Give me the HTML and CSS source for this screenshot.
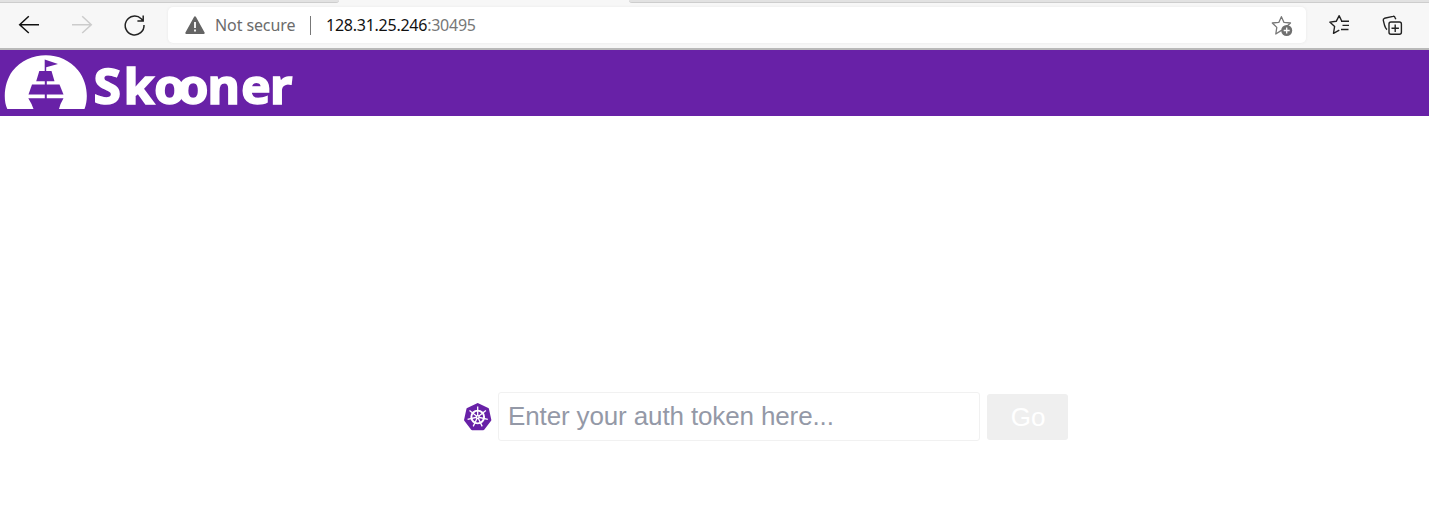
FILE: index.html
```html
<!DOCTYPE html>
<html lang="en">
<head>
<meta charset="utf-8">
<title>Skooner</title>
<link rel="stylesheet" href="styles.css">
</head>
<body>
<div class="tabs"><span class="tab tab-left"></span><span class="tab-active"></span><span class="tab tab-right"></span></div>
<nav class="toolbar">
  <svg class="nav-icons" width="168" height="42" viewBox="0 4 168 42" fill="none" stroke-width="1.5">
    <path stroke="#111" d="M39 24.7H19.5M28.8 16.2L19.7 24.7L28.8 33"/>
    <path stroke="#ccc" d="M72 24.7H91M82.2 16.2L91.3 24.7L82.2 33"/>
    <path stroke="#222" d="M144 25A9.4 9.4 0 1 1 141.2 18.8L143 20.8M143.2 15.4V21H137.4"/>
  </svg>
  <div class="address">
    <svg class="warning" width="20" height="19" viewBox="0 0 20 19"><path fill="#646464" stroke="#646464" stroke-width="2" stroke-linejoin="round" d="M10 1.3L18.7 17H1.3Z"/><path stroke="#fff" stroke-width="1.8" d="M10 6v6M10 13.5v2"/></svg>
    <span class="security">Not secure</span>
    <span class="divider"></span>
    <span class="url">128.31.25.246<span class="port">:30495</span></span>
    <svg class="star-add" width="24" height="24" viewBox="1270 13 24 24" fill="none">
      <path stroke="#777" stroke-width="1.3" stroke-linejoin="round" d="M1281.4 16.7L1284 22.4L1290.5 23L1285.8 27.3L1287 33L1281.4 30.4L1275.8 34L1276.8 27.4L1272.3 23L1278.8 22.4Z"/>
      <circle cx="1286.7" cy="30.5" r="5.5" fill="#707070"/>
      <path stroke="#fff" stroke-width="1.3" d="M1286.7 27.5v6M1283.7 30.5h6"/>
    </svg>
  </div>
  <svg class="actions" width="123" height="42" viewBox="1306 4 123 42" fill="none" stroke="#222" stroke-width="1.4" stroke-linejoin="round">
    <path d="M1344.5 21.3H1341.8L1339.2 15.7L1336.2 21.3L1329.8 22.1L1334.6 26.5L1333.5 33.4L1339.3 30.2M1341 21.3H1349M1342.5 25.4H1349M1341 29.5H1348.5"/>
    <rect x="1389" y="22" width="12.4" height="12.2" rx="2"/>
    <path d="M1395.2 24.6v7.4M1391.5 28.3h7.4M1395.8 19.3L1395 17.4Q1394.5 16 1393 16.4L1384.5 18.3Q1383 18.8 1383.3 20.3L1384.7 25.8Q1385.5 28.4 1387 29.6"/>
  </svg>
</nav>
<header class="header">
  <svg width="300" height="66" viewBox="0 50 300 66" role="img" aria-label="Skooner">
    <path fill="#fff" d="M7.3 109C2.3 98 5 81 12.5 71C28 50.5 62 49.5 78 70.3C87 81 89 98 84.5 109Z"/>
    <g fill="#6821a7"><path d="M44.7 59.6L58 64L46.2 67.3V71H51.5L54.5 81.3H36.2L39.3 71H44.7Z"/>
    <path d="M32 84.5H59.5L63.5 94.6H28.5Z"/><path d="M28.3 98.2H63.5Q60 104 59 109H33.5Q32 104 28.3 98.2Z"/></g>
    <path stroke="#6821a7" stroke-width="2" d="M45.8 80V86M45.8 94V99.5"/>
    <text class="wordmark" transform="scale(1.03 1)" y="103.7" x="90.9 119.9 149.6 172.4 201.4 234 262.1">Skooner</text>
  </svg>
</header>
<main class="login">
  <svg class="helm" width="30" height="30" viewBox="-14.7 -15 30 30">
    <path fill="#6821a7" stroke="#6821a7" stroke-width="2.5" stroke-linejoin="round" d="M0-12.7L10-7.9L12.4 2.9L5.5 12H-5.5L-12.4 2.9L-10-7.9Z"/>
    <g fill="none" stroke="#fff" stroke-width="1.3"><circle r="6.4" stroke-width="1.9"/><path d="M0-10.4V0M0 0L8.2-6.5M0 0L10.1 2.3M0 0L4.5 9.4M0 0L-4.5 9.4M0 0L-10.1 2.3M0 0L-8.2-6.5"/></g>
    <circle r="1.9" fill="#fff"/><circle r=".7" fill="#6821a7"/>
  </svg>
  <input class="token" type="text" placeholder="Enter your auth token here...">
  <button class="go" disabled>Go</button>
</main>
</body>
</html>
```
FILE: styles.css
```css
* { box-sizing: border-box; }
body { margin: 0; height: 529px; overflow: hidden; background: #fff; font-family: "Liberation Sans", Arial, sans-serif; }
.tabs { display: flex; height: 3px; background: #f7f7f7; }
.tab { height: 3px; background: #e2e2e2; border-bottom: 1px solid #cdcdcd; }
.tab-left { width: 339px; border-bottom-right-radius: 3px; }
.tab-active { width: 290px; }
.tab-right { flex: 1; border-bottom-left-radius: 3px; }
.toolbar { display: flex; align-items: center; height: 47px; padding-bottom: 1px; background: #f7f7f7; border-bottom: 2px solid #b9b9b9; }
.nav-icons, .actions { flex: none; }
.address { display: flex; align-items: center; width: 1138px; height: 36px; padding: 0 12px 0 17px; background: #fff; border-radius: 5px; box-shadow: 0 0 3px #e8e8e8; font-family: "Noto Sans", sans-serif; white-space: nowrap; }
.warning { flex: none; }
.security { width: 81px; margin-left: 10px; color: #6b6b6b; font-size: 16px; letter-spacing: -.1px; }
.divider { width: 1px; height: 19px; margin: 0 15px 0 14px; background: #777; }
.url { color: #111; font-size: 16px; letter-spacing: -.25px; }
.port { color: #777; }
.star-add { margin-left: auto; }
.header { height: 66px; background: #6821a7; }
.header svg { display: block; }
.wordmark { fill: #fff; stroke: #fff; stroke-width: 1.5px; font: 700 48.5px "Noto Sans", sans-serif; }
.login { display: flex; align-items: center; padding: 276px 0 0 463px; }
.helm { flex: none; }
.token { width: 482px; height: 49px; margin-left: 5px; padding: 0 9px; border: 1px solid #f1f1f1; border-radius: 3px; outline: 0; font: 26px "Liberation Sans", Arial, sans-serif; letter-spacing: -.13px; }
.token::placeholder { color: #9499a7; opacity: 1; }
.go { width: 81px; height: 46px; margin-left: 7px; padding: 1px 0 0 1px; border: 0; border-radius: 3px; background: #efefef; color: #fff; font: 26px "Liberation Sans", Arial, sans-serif; }
```
